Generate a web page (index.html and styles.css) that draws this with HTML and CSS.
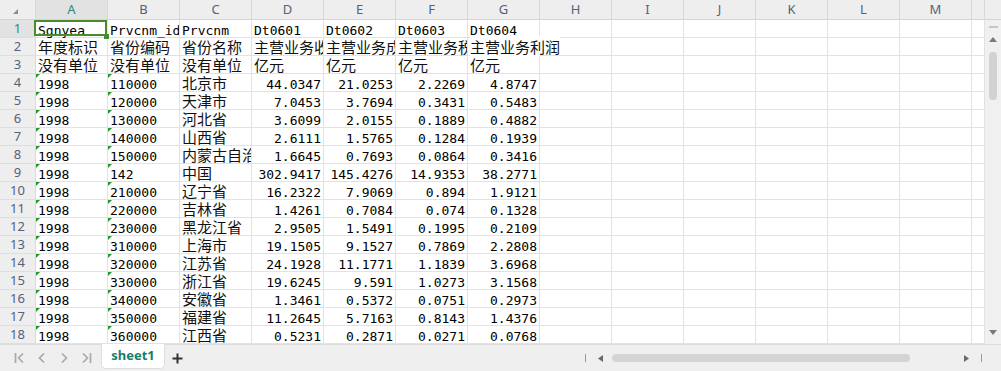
FILE: index.html
```html
<!DOCTYPE html>
<html lang="zh-CN">
<head>
<meta charset="utf-8">
<title>sheet1</title>
<link rel="stylesheet" href="styles.css">
</head>
<body>
<div class="app">
  <div class="sheet">
    <div class="corner"></div><div class="ch on">A</div><div class="ch">B</div><div class="ch">C</div><div class="ch">D</div><div class="ch">E</div><div class="ch">F</div><div class="ch">G</div><div class="ch">H</div><div class="ch">I</div><div class="ch">J</div><div class="ch">K</div><div class="ch">L</div><div class="ch">M</div><div class="ch"></div>

    <div class="rh on">1</div><div class="c sel">Sgnyea</div><div class="c">Prvcnm_id</div><div class="c">Prvcnm</div><div class="c">Dt0601</div><div class="c">Dt0602</div><div class="c">Dt0603</div><div class="c">Dt0604</div><div class="c"></div><div class="c"></div><div class="c"></div><div class="c"></div><div class="c"></div><div class="c"></div><div class="c"></div>

    <div class="rh">2</div><div class="c zh">年度标识</div><div class="c zh">省份编码</div><div class="c zh">省份名称</div><div class="c zh">主营业务收入</div><div class="c zh">主营业务成本</div><div class="c zh">主营业务税金及附加</div><div class="c zh ov"><span>主营业务利润</span></div><div class="c"></div><div class="c"></div><div class="c"></div><div class="c"></div><div class="c"></div><div class="c"></div><div class="c"></div>

    <div class="rh">3</div><div class="c zh">没有单位</div><div class="c zh">没有单位</div><div class="c zh">没有单位</div><div class="c zh">亿元</div><div class="c zh">亿元</div><div class="c zh">亿元</div><div class="c zh">亿元</div><div class="c"></div><div class="c"></div><div class="c"></div><div class="c"></div><div class="c"></div><div class="c"></div><div class="c"></div>

    <div class="rh">4</div><div class="c t">1998</div><div class="c t">110000</div><div class="c zh">北京市</div><div class="c n">44.0347</div><div class="c n">21.0253</div><div class="c n">2.2269</div><div class="c n">4.8747</div><div class="c"></div><div class="c"></div><div class="c"></div><div class="c"></div><div class="c"></div><div class="c"></div><div class="c"></div>

    <div class="rh">5</div><div class="c t">1998</div><div class="c t">120000</div><div class="c zh">天津市</div><div class="c n">7.0453</div><div class="c n">3.7694</div><div class="c n">0.3431</div><div class="c n">0.5483</div><div class="c"></div><div class="c"></div><div class="c"></div><div class="c"></div><div class="c"></div><div class="c"></div><div class="c"></div>

    <div class="rh">6</div><div class="c t">1998</div><div class="c t">130000</div><div class="c zh">河北省</div><div class="c n">3.6099</div><div class="c n">2.0155</div><div class="c n">0.1889</div><div class="c n">0.4882</div><div class="c"></div><div class="c"></div><div class="c"></div><div class="c"></div><div class="c"></div><div class="c"></div><div class="c"></div>

    <div class="rh">7</div><div class="c t">1998</div><div class="c t">140000</div><div class="c zh">山西省</div><div class="c n">2.6111</div><div class="c n">1.5765</div><div class="c n">0.1284</div><div class="c n">0.1939</div><div class="c"></div><div class="c"></div><div class="c"></div><div class="c"></div><div class="c"></div><div class="c"></div><div class="c"></div>

    <div class="rh">8</div><div class="c t">1998</div><div class="c t">150000</div><div class="c zh">内蒙古自治区</div><div class="c n">1.6645</div><div class="c n">0.7693</div><div class="c n">0.0864</div><div class="c n">0.3416</div><div class="c"></div><div class="c"></div><div class="c"></div><div class="c"></div><div class="c"></div><div class="c"></div><div class="c"></div>

    <div class="rh">9</div><div class="c t">1998</div><div class="c t">142</div><div class="c zh">中国</div><div class="c n">302.9417</div><div class="c n">145.4276</div><div class="c n">14.9353</div><div class="c n">38.2771</div><div class="c"></div><div class="c"></div><div class="c"></div><div class="c"></div><div class="c"></div><div class="c"></div><div class="c"></div>

    <div class="rh">10</div><div class="c t">1998</div><div class="c t">210000</div><div class="c zh">辽宁省</div><div class="c n">16.2322</div><div class="c n">7.9069</div><div class="c n">0.894</div><div class="c n">1.9121</div><div class="c"></div><div class="c"></div><div class="c"></div><div class="c"></div><div class="c"></div><div class="c"></div><div class="c"></div>

    <div class="rh">11</div><div class="c t">1998</div><div class="c t">220000</div><div class="c zh">吉林省</div><div class="c n">1.4261</div><div class="c n">0.7084</div><div class="c n">0.074</div><div class="c n">0.1328</div><div class="c"></div><div class="c"></div><div class="c"></div><div class="c"></div><div class="c"></div><div class="c"></div><div class="c"></div>

    <div class="rh">12</div><div class="c t">1998</div><div class="c t">230000</div><div class="c zh">黑龙江省</div><div class="c n">2.9505</div><div class="c n">1.5491</div><div class="c n">0.1995</div><div class="c n">0.2109</div><div class="c"></div><div class="c"></div><div class="c"></div><div class="c"></div><div class="c"></div><div class="c"></div><div class="c"></div>

    <div class="rh">13</div><div class="c t">1998</div><div class="c t">310000</div><div class="c zh">上海市</div><div class="c n">19.1505</div><div class="c n">9.1527</div><div class="c n">0.7869</div><div class="c n">2.2808</div><div class="c"></div><div class="c"></div><div class="c"></div><div class="c"></div><div class="c"></div><div class="c"></div><div class="c"></div>

    <div class="rh">14</div><div class="c t">1998</div><div class="c t">320000</div><div class="c zh">江苏省</div><div class="c n">24.1928</div><div class="c n">11.1771</div><div class="c n">1.1839</div><div class="c n">3.6968</div><div class="c"></div><div class="c"></div><div class="c"></div><div class="c"></div><div class="c"></div><div class="c"></div><div class="c"></div>

    <div class="rh">15</div><div class="c t">1998</div><div class="c t">330000</div><div class="c zh">浙江省</div><div class="c n">19.6245</div><div class="c n">9.591</div><div class="c n">1.0273</div><div class="c n">3.1568</div><div class="c"></div><div class="c"></div><div class="c"></div><div class="c"></div><div class="c"></div><div class="c"></div><div class="c"></div>

    <div class="rh">16</div><div class="c t">1998</div><div class="c t">340000</div><div class="c zh">安徽省</div><div class="c n">1.3461</div><div class="c n">0.5372</div><div class="c n">0.0751</div><div class="c n">0.2973</div><div class="c"></div><div class="c"></div><div class="c"></div><div class="c"></div><div class="c"></div><div class="c"></div><div class="c"></div>

    <div class="rh">17</div><div class="c t">1998</div><div class="c t">350000</div><div class="c zh">福建省</div><div class="c n">11.2645</div><div class="c n">5.7163</div><div class="c n">0.8143</div><div class="c n">1.4376</div><div class="c"></div><div class="c"></div><div class="c"></div><div class="c"></div><div class="c"></div><div class="c"></div><div class="c"></div>

    <div class="rh">18</div><div class="c t">1998</div><div class="c t">360000</div><div class="c zh">江西省</div><div class="c n">0.5231</div><div class="c n">0.2871</div><div class="c n">0.0271</div><div class="c n">0.0768</div><div class="c"></div><div class="c"></div><div class="c"></div><div class="c"></div><div class="c"></div><div class="c"></div><div class="c"></div>
  </div>

  <div class="vbar">
    <div class="vbar-head"></div>
    <div class="vtrack">
      <div class="vdash"></div>
      <svg class="varrow" width="8" height="5" viewBox="0 0 8 5"><polygon points="0,5 4,0 8,5" fill="#7a7a7a"/></svg>
      <div class="vthumb"></div>
      <svg class="varrow down" width="8" height="5" viewBox="0 0 8 5"><polygon points="0,0 8,0 4,5" fill="#7a7a7a"/></svg>
    </div>
  </div>

  <div class="bar">
    <div class="nav">
      <svg class="navicon" width="12" height="12" viewBox="0 0 12 12"><path d="M1.5 1v10M9 1.5L4.5 6 9 10.5" fill="none" stroke="#a9a9a9" stroke-width="1.7"/></svg>
      <svg class="navicon" width="12" height="12" viewBox="0 0 12 12"><path d="M8 1.5L3.5 6 8 10.5" fill="none" stroke="#a9a9a9" stroke-width="1.7"/></svg>
      <svg class="navicon" width="12" height="12" viewBox="0 0 12 12"><path d="M4 1.5L8.5 6 4 10.5" fill="none" stroke="#a9a9a9" stroke-width="1.7"/></svg>
      <svg class="navicon" width="12" height="12" viewBox="0 0 12 12"><path d="M3 1.5L7.5 6 3 10.5M10.5 1v10" fill="none" stroke="#a9a9a9" stroke-width="1.7"/></svg>
    </div>
    <div class="tab">sheet1</div>
    <svg class="add" width="11" height="11" viewBox="0 0 11 11"><path d="M5.5 0.5v10M0.5 5.5h10" stroke="#333" stroke-width="2"/></svg>
    <div class="hscroll">
      <div class="tick"></div>
      <svg class="harrow" width="5" height="7" viewBox="0 0 5 7"><polygon points="5,0 0,3.5 5,7" fill="#6a6a6a"/></svg>
      <div class="hthumb"></div>
      <svg class="harrow right" width="5" height="7" viewBox="0 0 5 7"><polygon points="0,0 5,3.5 0,7" fill="#6a6a6a"/></svg>
      <div class="tick end"></div>
    </div>
  </div>
</div>
</body>
</html>
```

FILE: styles.css
```css
* { box-sizing: border-box; }
html, body { margin: 0; padding: 0; background: #fff; }
body { font-family: "Noto Sans", "Liberation Sans", sans-serif; }

.app {
  width: 1001px;
  height: 371px;
  display: grid;
  grid-template-columns: 985px 16px;
  grid-template-rows: 344px 27px;
  overflow: hidden;
}

/* ---------- sheet grid ---------- */
.sheet {
  display: grid;
  grid-template-columns: 36px repeat(13, 72px) 13px;
  grid-template-rows: 20px;
  grid-auto-rows: 18px;
  overflow: hidden;
}

.corner, .ch {
  background: #eeeeee;
  border-right: 1px solid #d9d9d9;
  border-bottom: 1px solid #d4d4d4;
}
.corner { position: relative; }
.corner::after {
  content: "";
  position: absolute;
  right: 17px;
  bottom: 5px;
  border-left: 5px solid transparent;
  border-bottom: 5px solid #8c8c8c;
}
.ch {
  font-size: 13px;
  line-height: 19px;
  text-align: center;
  color: #56607a;
}
.rh {
  background: #eeeeee;
  border-right: 1px solid #d9d9d9;
  border-bottom: 1px solid #dedede;
  font-size: 13px;
  line-height: 17px;
  text-align: center;
  color: #56607a;
}
.ch.on, .rh.on {
  background: #e2e2e2;
  color: #2b8a78;
}

.c {
  position: relative;
  border-right: 1px solid #e2e2e2;
  border-bottom: 1px solid #e2e2e2;
  font-family: "DejaVu Sans Mono", "Noto Sans CJK SC", monospace;
  font-size: 13px;
  line-height: 17px;
  padding: 2px 2px 0 2px;
  white-space: nowrap;
  overflow-x: clip;
  overflow-y: visible;
  color: #000;
}
.c.zh {
  font-family: "Noto Sans CJK SC", sans-serif;
  font-size: 15px;
  padding-top: 0;
  color: #111;
}
.c.n { text-align: right; }
.c.ov { overflow: visible; }
.c.ov span { background: #fff; }

.c.t::before {
  content: "";
  position: absolute;
  left: 0;
  top: 0;
  border-top: 4px solid #1e9a2e;
  border-right: 4px solid transparent;
}

.c.sel { overflow: visible; }
.c.sel::after {
  content: "";
  position: absolute;
  left: -2px;
  top: 0;
  right: 0;
  bottom: 1px;
  border: 2px solid #4a8b2e;
  z-index: 2;
}
.c.sel::before {
  content: "";
  position: absolute;
  right: -2px;
  bottom: -2px;
  width: 5px;
  height: 5px;
  background: #4a8b2e;
  z-index: 3;
}

/* ---------- vertical scrollbar ---------- */
.vbar {
  display: flex;
  flex-direction: column;
  background: #f0f0f0;
}
.vbar-head {
  height: 20px;
  background: #eeeeee;
  border-bottom: 1px solid #d4d4d4;
}
.vtrack {
  flex: 1;
  display: flex;
  flex-direction: column;
  align-items: center;
}
.vdash {
  width: 9px;
  height: 2px;
  background: #c6c6c6;
  margin-top: 6px;
}
.varrow { display: block; margin-top: 9px; }
.vthumb {
  width: 8px;
  height: 48px;
  margin-top: 10px;
  border-radius: 4px;
  background: #d2d2d2;
}
.varrow.down { margin-top: auto; margin-bottom: 9px; }

/* ---------- bottom bar ---------- */
.bar {
  grid-column: 1 / 3;
  display: flex;
  align-items: center;
  background: #efefef;
  border-top: 1px solid #dcdcdc;
}
.nav {
  display: flex;
  align-items: center;
  padding-left: 14px;
  width: 101px;
  gap: 10px;
}
.navicon { display: block; }
.tab {
  align-self: flex-start;
  margin-top: -1px;
  width: 64px;
  height: 25px;
  background: #fff;
  border: 1px solid #dedede;
  border-top: none;
  border-radius: 0 0 5px 5px;
  font-family: "Noto Sans", sans-serif;
  font-weight: 700;
  font-size: 13px;
  line-height: 23px;
  text-align: center;
  color: #157e6c;
}
.add { display: block; margin-left: 7px; }

.hscroll {
  margin-left: auto;
  margin-right: 19px;
  width: 397px;
  display: flex;
  align-items: center;
}
.tick {
  width: 1px;
  height: 8px;
  background: #9a9a9a;
}
.harrow { display: block; margin-left: 12px; }
.hthumb {
  width: 298px;
  height: 8px;
  margin-left: 9px;
  border-radius: 4px;
  background: #d4d4d4;
}
.harrow.right { margin-left: auto; }
.tick.end { margin-left: 12px; }
```
